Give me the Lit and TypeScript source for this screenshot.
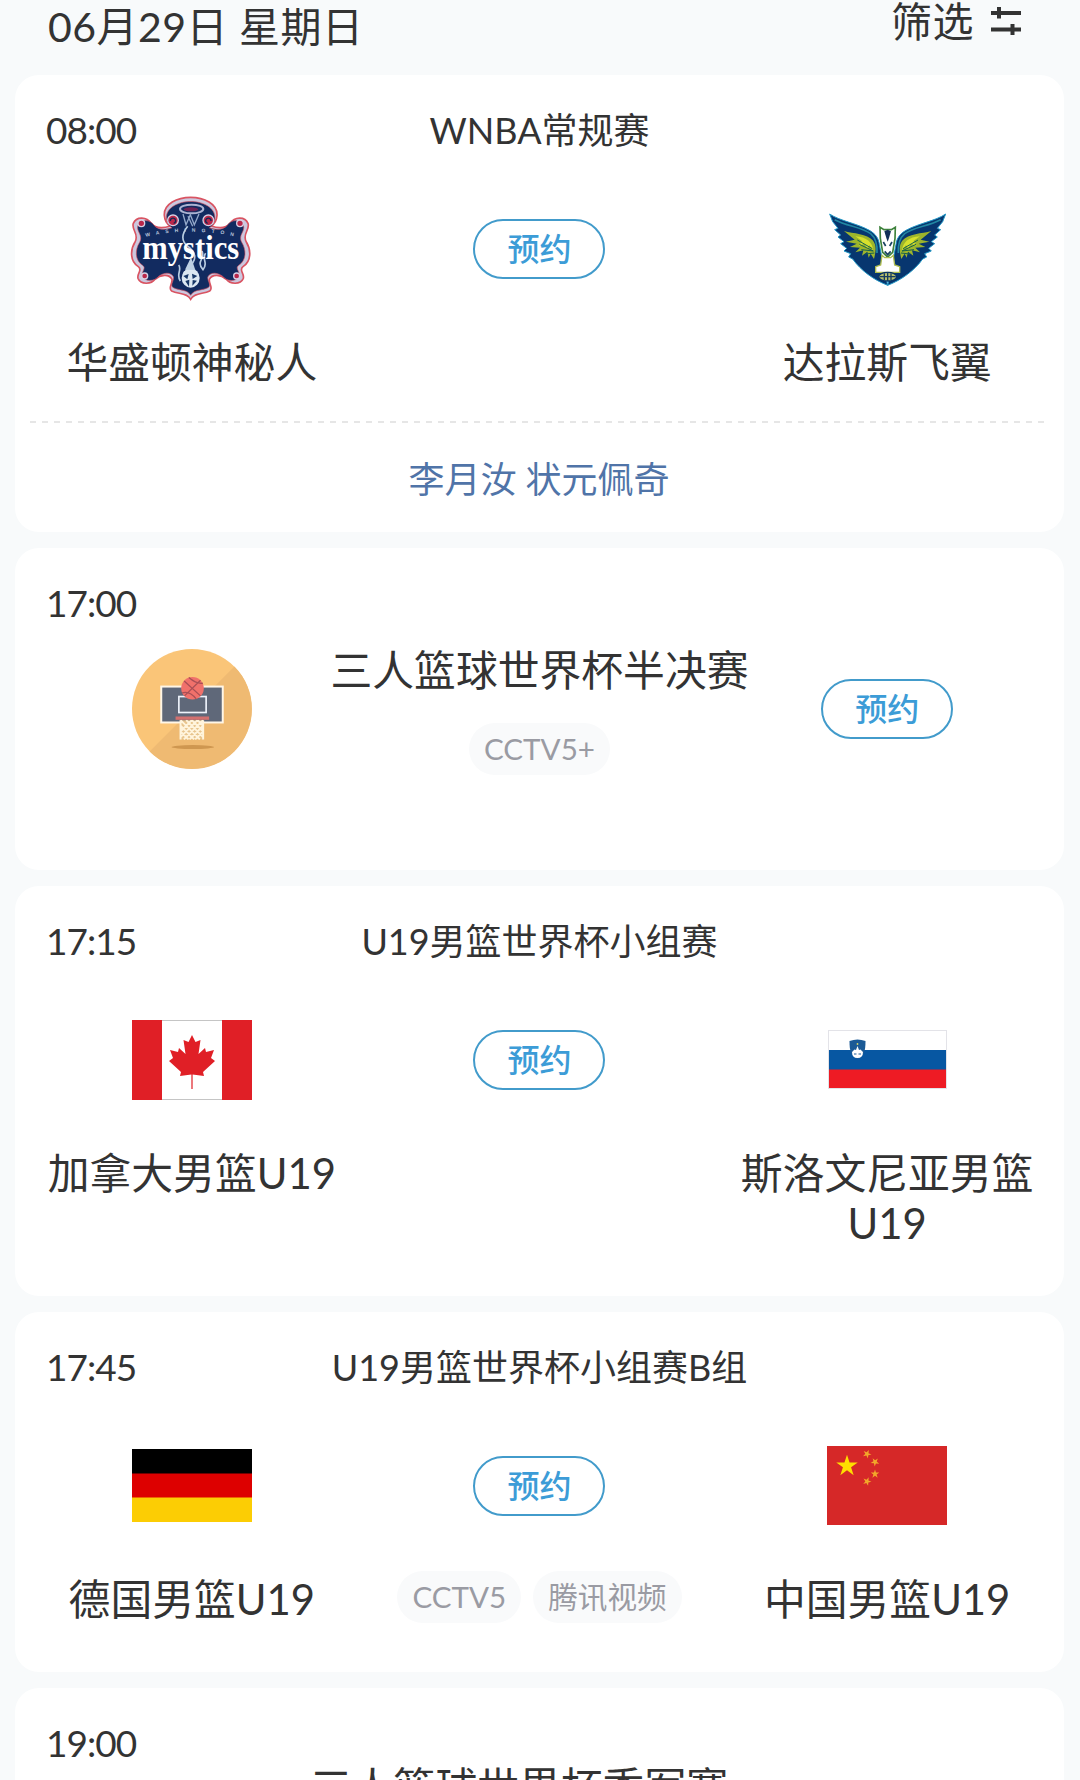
import { LitElement, html, svg, css, nothing } from "lit";
import { customElement, property } from "lit/decorators.js";

interface Team {
    name: string;
    emblem: string;
}

interface Match {
    time: string;
    title: string;
    kind: "versus" | "solo" | "peek";
    height: number;
    home?: Team;
    away?: Team;
    channels?: string[];
    note?: string;
}

const MATCHES: Match[] = [
    {
        time: "08:00", title: "WNBA常规赛", kind: "versus", height: 457,
        home: { name: "华盛顿神秘人", emblem: "mystics" },
        away: { name: "达拉斯飞翼", emblem: "wings" },
        note: "李月汝 状元佩奇",
    },
    { time: "17:00", title: "三人篮球世界杯半决赛", kind: "solo", height: 322, channels: ["CCTV5+"] },
    {
        time: "17:15", title: "U19男篮世界杯小组赛", kind: "versus", height: 410,
        home: { name: "加拿大男篮U19", emblem: "canada" },
        away: { name: "斯洛文尼亚男篮U19", emblem: "slovenia" },
    },
    {
        time: "17:45", title: "U19男篮世界杯小组赛B组", kind: "versus", height: 360,
        home: { name: "德国男篮U19", emblem: "germany" },
        away: { name: "中国男篮U19", emblem: "china" },
        channels: ["CCTV5", "腾讯视频"],
    },
    { time: "19:00", title: "三人篮球世界杯季军赛", kind: "peek", height: 322 },
];

const SHIELD = "M215 34C175 34 134 54 136 88C137 104 144 114 154 120C130 128 108 126 96 112C84 92 52 90 43 112C36 132 62 144 48 168C33 192 33 226 58 242C72 252 53 262 57 277C66 298 98 294 108 280C124 266 150 262 159 280C161 294 146 306 158 315C178 325 204 320 215 340C226 320 252 325 272 315C284 306 269 294 271 280C280 262 306 266 322 280C332 294 364 298 373 277C377 262 358 252 372 242C397 226 397 192 382 168C368 144 394 132 387 112C378 90 346 92 334 112C322 126 300 128 276 120C286 114 293 104 294 88C296 54 255 34 215 34Z";

const STAR = "M0 -10L2.25 -3.1H9.5L3.6 1.2L5.9 8.1L0 3.8L-5.9 8.1L-3.6 1.2L-9.5 -3.1H-2.25Z";

const wing = svg`
    <path d="M29 39C60 60 108 66 148 88C166 98 176 112 178 130L186 172L203 253C160 236 122 208 98 174L86 168L92 158L72 150L80 142L62 128L72 122L54 108L62 102L44 86L54 82L38 62Z" fill="#07366f" stroke="#2298c6" stroke-width="3"/>
    <path d="M44 56C82 76 124 78 152 98C168 112 172 138 171 156" fill="none" stroke="#2187a2" stroke-width="5"/>
    <path d="M72 90C100 98 142 98 158 118C170 132 168 150 162 174L152 158L146 170L142 152L126 164L130 148L106 154L120 140L90 138L110 128L78 122L104 116Z" fill="#9db52c"/>
    <path d="M106 106C140 108 158 124 160 150L148 132L142 144L134 128L116 134L126 120Z" fill="#d7e12d"/>
    <path d="M160 150L118 130M160 150L124 146M157 143L112 117M163 156L136 159" stroke="#16624d" stroke-width="3"/>
`;

const EMBLEMS: Record<string, unknown> = {
    mystics: html`
        <svg width="145" height="125" viewBox="0 0 435 375">
            <path d="${SHIELD}" fill="#cbc8df" stroke="#d95462" stroke-width="5"/>
            <path d="${SHIELD}" transform="translate(215 190) scale(.92 .92) translate(-215 -190)" fill="#122b60" stroke="#d95462" stroke-width="2"/>
            <g fill="#b9274a" stroke="#d7cfe3" stroke-width="4">
                <circle cx="162" cy="103" r="16"/><circle cx="268" cy="103" r="16"/>
                <circle cx="67" cy="112" r="10"/><circle cx="363" cy="112" r="10"/>
                <circle cx="77" cy="270" r="9"/><circle cx="353" cy="270" r="9"/>
            </g>
            <path d="M154 105a8 8 0 1 1 10 7M276 105a8 8 0 1 0-10 7" fill="none" stroke="#152955" stroke-width="4"/>
            <ellipse cx="218" cy="69" rx="35" ry="13" fill="#152b61" stroke="#abb3d2" stroke-width="6"/>
            <ellipse cx="216" cy="70" rx="22" ry="6" fill="#6f2254"/>
            <path d="M192 84L201 116L214 86L226 116L240 84M207 91L221 121" fill="none" stroke="#93a8ca" stroke-width="4"/>
            <path id="arch" d="M80 152Q215 122 350 152" fill="none"/>
            <text class="arch-text"><textPath href="#arch" textLength="266">WASHINGTON</textPath></text>
            <path d="M206 121C188 144 185 166 208 182C244 210 224 232 194 262M249 195C260 220 229 225 252 251C270 230 246 220 260 202M179 237C190 250 170 266 184 285" fill="none" stroke="#b8cce1" stroke-width="5"/>
            <text class="mystics-text" transform="translate(70 219) scale(.76 1)" textLength="382" lengthAdjust="spacingAndGlyphs">mystics</text>
            <ellipse cx="215" cy="276" rx="27" ry="29" fill="#dce8f2"/>
            <path d="M216 214L198 251L229 252Z" fill="#bed0e3"/>
            <path d="M193 270L209 264L205 280ZM219 263L235 270L221 279ZM199 285L211 281L210 302ZM221 282L234 284L220 299Z" fill="#173767"/>
        </svg>`,
    wings: html`
        <svg width="135" height="95" viewBox="0 0 405 285">
            ${wing}
            <g transform="matrix(-1 0 0 1 406 0)">${wing}</g>
            <path d="M180 79L192 86H214L226 79L225 112L218 154L203 168L188 154L181 112Z" fill="#fff" stroke="#3e823c" stroke-width="5"/>
            <path d="M193 91L203 86L213 91L207 111L203 122L199 111Z" fill="#112e58"/>
            <path d="M190 123L197 135M216 123L209 135M194 151L203 161L212 151" fill="none" stroke="#1c4463" stroke-width="5"/>
            <path d="M186 163L194 170H212L220 163L224 192L239 197V214H167V197L182 192Z" fill="#fff" stroke="#afbd4f" stroke-width="4"/>
            <ellipse cx="203" cy="227" rx="27" ry="13" fill="#b5bd6b" stroke="#083465" stroke-width="4"/>
            <path d="M193 217V237M203 214V240M213 217V237M179 227H227" stroke="#163d60" stroke-width="4"/>
        </svg>`,
    hoop: html`
        <svg width="120" height="120" viewBox="66 56 361 361">
            <circle cx="246" cy="236" r="180" fill="#fac578"/>
            <path d="M374 109A180 180 0 0 1 119 364Z" fill="#efba72"/>
            <rect x="154" y="169" width="185" height="108" fill="#5f6879" stroke="#fff6e6" stroke-width="6"/>
            <rect x="207" y="199" width="82" height="48" fill="none" stroke="#eef3fb" stroke-width="5"/>
            <circle cx="248" cy="174" r="34" fill="#f0716b"/>
            <path d="M223 152L272 197M272 150L224 197M237 142C252 155 266 161 279 159M217 188C232 183 248 192 259 206" fill="none" stroke="#a94f55" stroke-width="4"/>
            <path d="M212 270H280V328H212Z" fill="#e8c58e"/>
            <path d="M212 270L270 328M229 270L280 321M246 270L280 304M263 270L280 287M212 287L253 328M212 304L236 328M280 270L222 328M263 270L212 321M246 270L212 304M280 287L239 328M280 304L256 328M212 270V328M280 270V328" stroke="#fff4dc" stroke-width="6"/>
            <rect x="197" y="259" width="101" height="10" fill="#d2706f"/>
            <ellipse cx="249" cy="351" rx="64" ry="6" fill="#cf9750"/>
        </svg>`,
    canada: html`
        <svg width="120" height="80" viewBox="0 0 120 80">
            <rect x="0" y=".5" width="120" height="79" fill="#fff" stroke="#c5c5c5"/>
            <path d="M0 0H30V80H0ZM90 0H120V80H90Z" fill="#e01f26"/>
            <path d="M60 15L56.5 22L51.5 20L53.5 34L47 28L46 32L38 30L41 38L37 41L49 52L48 56L59.4 54.5V69H60.6V54.5L72 56L71 52L83 41L79 38L82 30L74 32L73 28L66.5 34L68.5 20L63.5 22Z" fill="#e01f26"/>
        </svg>`,
    slovenia: html`
        <svg width="119" height="59" viewBox="0 0 119 59">
            <rect x=".5" y=".5" width="118" height="58" fill="#fff" stroke="#e3e3e8"/>
            <rect x="1" y="20" width="117" height="20" fill="#0757a2"/>
            <rect x="1" y="39.5" width="117" height="18.5" fill="#ee1b24"/>
            <path d="M21.5 11Q29.5 8 37.5 11C37.5 21 36 27 29.5 29C23 27 21.5 21 21.5 11Z" fill="#1b5a96"/>
            <path d="M24 22L26.5 19.5L28 20L29.5 16L31 20L32.5 19.5L35 22Q35 28 29.5 28Q24 28 24 22Z" fill="#fff"/>
            <path d="M26 24H28.5M30.5 24H33" stroke="#1b5a96"/>
            <circle cx="29.5" cy="14" r=".9" fill="#d5d465"/>
        </svg>`,
    germany: html`
        <svg width="120" height="73" viewBox="0 0 120 73">
            <rect width="120" height="25" fill="#000"/>
            <rect y="24.5" width="120" height="24.5" fill="#dd0000"/>
            <rect y="48.5" width="120" height="24.5" fill="#fccd04"/>
        </svg>`,
    china: html`
        <svg width="120" height="79" viewBox="0 0 120 79">
            <rect width="120" height="79" fill="#d62828"/>
            <path d="${STAR}" transform="translate(20 20) scale(1.13)" fill="#ffde00"/>
            <g fill="#f2a72a">
                <path d="${STAR}" transform="translate(40 8) rotate(24) scale(.45)"/>
                <path d="${STAR}" transform="translate(48 16) rotate(40) scale(.45)"/>
                <path d="${STAR}" transform="translate(48 28) scale(.45)"/>
                <path d="${STAR}" transform="translate(40 35.5) rotate(22) scale(.45)"/>
            </g>
        </svg>`,
};

@customElement("match-card")
export class MatchCard extends LitElement {
    @property({ attribute: false }) match!: Match;

    static styles = css`
        :host {
            display: block;
            color: #333;
        }
        .card {
            box-sizing: border-box;
            height: 100%;
            padding: 0 3px;
            border-radius: 24px;
            background: #fff;
            overflow: hidden;
        }
        .head {
            display: grid;
            grid-template-columns: 1fr auto 1fr;
            align-items: center;
            height: 110px;
            font-size: 36px;
            line-height: 48px;
        }
        .time {
            padding-left: 28px;
            font-size: 37px;
            letter-spacing: -1px;
        }
        .row {
            display: grid;
            grid-template-columns: repeat(3, 1fr);
        }
        .col {
            display: flex;
            flex-direction: column;
            align-items: center;
            min-width: 0;
        }
        .emblem {
            display: flex;
            align-items: center;
            justify-content: center;
            height: 127px;
        }
        svg {
            display: block;
        }
        .name {
            width: 300px;
            margin-top: 25px;
            font-size: 41.8px;
            line-height: 50px;
            text-align: center;
        }
        .book {
            box-sizing: border-box;
            width: 132px;
            height: 60px;
            padding: 0;
            border: 2px solid #429bcb;
            border-radius: 30px;
            background: none;
            color: #3c9cd7;
            font: inherit;
            font-size: 32px;
            font-weight: 500;
            line-height: 54px;
        }
        .channels {
            display: flex;
            gap: 12px;
            margin-top: 22px;
        }
        .channel {
            padding: 0 15px;
            border-radius: 26px;
            background: #f9fafb;
            color: #9a9ba3;
            font-size: 29.6px;
            line-height: 52px;
            white-space: nowrap;
        }
        .solo {
            align-items: center;
            height: 132px;
            margin-top: -15px;
        }
        .solo .channels {
            margin-top: 26px;
        }
        .solo-title {
            font-size: 41.8px;
            line-height: 54px;
            white-space: nowrap;
        }
        .peek {
            margin: -38px 41px 0 0;
            text-align: center;
        }
        .note {
            margin: 34px 13px 0 12px;
            color: #5074a8;
            font-size: 36px;
            line-height: 112px;
            text-align: center;
        }
        .dashes {
            height: 2px;
            background: repeating-linear-gradient(90deg, #e6e6e6 0 6px, transparent 6px 12px);
        }
        .mystics-text {
            font: bold 104px "Liberation Serif", serif;
            fill: #fff;
        }
        .arch-text {
            font: bold 15px "Liberation Sans", sans-serif;
            fill: #b9c6dd;
        }
    `

    renderTeam(team: Team) {
        return html`
            <div class="col">
                <div class="emblem">${EMBLEMS[team.emblem]}</div>
                <div class="name">${team.name}</div>
            </div>
        `
    }

    renderChannels() {
        const channels = this.match.channels;
        if (!channels) {
            return nothing;
        }
        return html`
            <div class="channels">
                ${channels.map(c => html`<span class="channel">${c}</span>`)}
            </div>
        `
    }

    renderBody() {
        const m = this.match;
        if (m.kind === "peek") {
            return html`<div class="solo-title peek">${m.title}</div>`
        }
        if (m.kind === "solo") {
            return html`
                <div class="row solo">
                    <div class="col">${EMBLEMS.hoop}</div>
                    <div class="col">
                        <div class="solo-title">${m.title}</div>
                        ${this.renderChannels()}
                    </div>
                    <div class="col"><button class="book">预约</button></div>
                </div>
            `
        }
        return html`
            <div class="row">
                ${this.renderTeam(m.home!)}
                <div class="col">
                    <div class="emblem"><button class="book">预约</button></div>
                    ${this.renderChannels()}
                </div>
                ${this.renderTeam(m.away!)}
            </div>
        `
    }

    render() {
        const m = this.match;
        return html`
            <div class="card">
                <div class="head">
                    <span class="time">${m.time}</span>
                    <span>${m.kind === "versus" ? m.title : nothing}</span>
                </div>
                ${this.renderBody()}
                ${m.note ? html`<div class="note"><div class="dashes"></div>${m.note}</div>` : nothing}
            </div>
        `
    }
}

@customElement("app-root")
export class AppRoot extends LitElement {
    static styles = css`
        :host {
            display: block;
            box-sizing: border-box;
            height: 1780px;
            overflow: hidden;
            background: #f8fafb;
            color: #333;
            font-family: Lato, "Noto Sans CJK SC", sans-serif;
        }
        .bar {
            display: flex;
            justify-content: space-between;
            height: 75px;
            padding: 0 59px 0 48px;
            font-size: 41px;
        }
        .day {
            line-height: 53px;
            letter-spacing: 0.5px;
        }
        .filter {
            display: flex;
            gap: 17px;
            line-height: 43px;
            letter-spacing: 0.5px;
        }
        .filter svg {
            margin-top: 7px;
        }
        .list {
            display: flex;
            flex-direction: column;
            gap: 16px;
            padding: 0 16px 0 15px;
        }
        match-card {
            flex: none;
        }
    `

    render() {
        return html`
            <div class="bar">
                <span class="day">06月29日 星期日</span>
                <span class="filter">
                    筛选
                    <svg width="30" height="28" viewBox="0 0 30 28">
                        <path d="M0 6H30M8 0V11.5M0 22.5H30M21.5 17V28" stroke="#333" stroke-width="4"/>
                    </svg>
                </span>
            </div>
            <div class="list">
                ${MATCHES.map(m => html`
                    <match-card .match=${m} style="height: ${m.height}px"></match-card>
                `)}
            </div>
        `
    }
}
